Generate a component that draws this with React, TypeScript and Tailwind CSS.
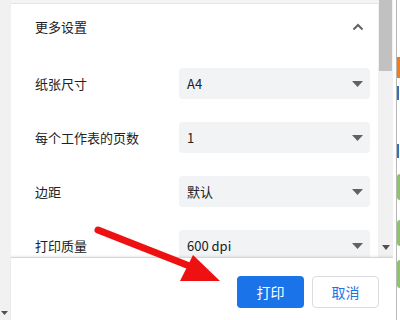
import React from "react";

const font = { fontFamily: '"Noto Sans CJK SC", "Noto Sans", sans-serif' };

function Caret() {
    return (
        <svg width="11" height="6" viewBox="0 0 11 6" className="shrink-0">
            <path d="M0 0 L11 0 L5.5 6 Z" fill="#5f6368" />
        </svg>
    );
}

const rows = [
    { label: "纸张尺寸", value: "A4" },
    { label: "每个工作表的页数", value: "1" },
    { label: "边距", value: "默认" },
    { label: "打印质量", value: "600 dpi" },
];

export default function App() {
    return (
        <div className="relative w-[400px] h-[320px] overflow-hidden bg-white flex" style={font}>
            {/* left strip */}
            <div className="w-[11px] h-full bg-[#f1f1f1] flex flex-col justify-end items-start pb-[5px] pl-[1px]">
                <svg width="7" height="4" viewBox="0 0 7 4">
                    <path d="M0 0 L7 0 L3.5 4 Z" fill="#505050" />
                </svg>
            </div>

            {/* main dialog column */}
            <div className="w-[382px] h-full flex flex-col">
                <div className="h-[257px] flex">
                    {/* scroll content */}
                    <div className="w-[367px] flex flex-col overflow-hidden">
                        <div className="h-[4px] bg-[#f4f4f4] border-b border-[#e6e6e6] shrink-0" />
                        <div className="h-[45px] shrink-0 flex items-center justify-between pl-[24px] pr-[14px]">
                            <span className="text-[13px] text-[#202124]">更多设置</span>
                            <svg width="12" height="8" viewBox="0 0 12 8">
                                <path d="M1.5 6.5 L6 2 L10.5 6.5" stroke="#5f6368" strokeWidth="2" fill="none" />
                            </svg>
                        </div>
                        <div className="flex flex-col gap-[23px] mt-[19px] pl-[24px] pr-[8px]">
                            {rows.map((r) => (
                                <div key={r.label} className="flex items-center h-[31px] shrink-0">
                                    <span className="w-[144px] text-[13px] text-[#202124]">{r.label}</span>
                                    <div className="flex-1 h-full rounded-[4px] bg-[#f1f3f4] flex items-center justify-between pl-[8px] pr-[7px]">
                                        <span className="text-[13px] text-[#202124]">{r.value}</span>
                                        <Caret />
                                    </div>
                                </div>
                            ))}
                        </div>
                    </div>
                    {/* scrollbar */}
                    <div className="w-[15px] h-full bg-[#f1f1f1] flex flex-col items-center justify-between pb-[7px]">
                        <div className="w-[13px] h-[71px] bg-[#c1c1c1]" />
                        <svg width="8" height="5" viewBox="0 0 8 5">
                            <path d="M0 0 L8 0 L4 5 Z" fill="#505050" />
                        </svg>
                    </div>
                </div>

                {/* footer */}
                <div className="flex-1 bg-white border-t border-[#d6d6d6] shadow-[0_-1px_2px_rgba(0,0,0,0.08)] flex justify-end items-start gap-[8px] pt-[18px] pr-[14px]">
                    <button className="w-[67px] h-[32px] rounded-[4px] bg-[#1a73e8] text-white text-[14px]">打印</button>
                    <button className="w-[67px] h-[32px] rounded-[4px] border border-[#dadce0] bg-white text-[#1a73e8] text-[14px]">取消</button>
                </div>
            </div>

            {/* right strip: neighbouring page */}
            <div className="w-[7px] h-full bg-white flex">
                <div className="w-[3px]" />
                <div className="w-px h-full bg-[#b8b8b8]" />
                <div className="flex-1 flex flex-col">
                    <div className="h-[57px]" />
                    <div className="h-[21px] bg-[#f07c1e]" />
                    <div className="h-[8px]" />
                    <div className="h-[14px] w-[2px] bg-[#3b6fb6]" />
                    <div className="h-[44px]" />
                    <div className="h-[14px] w-[2px] bg-[#3b6fb6]" />
                    <div className="h-[16px]" />
                    <div className="h-[26px] rounded-l-full bg-[#8cc46a]" />
                    <div className="h-[20px]" />
                    <div className="h-[26px] rounded-l-full bg-[#8cc46a]" />
                    <div className="h-[14px]" />
                    <div className="h-[28px] rounded-l-full bg-[#8cc46a]" />
                </div>
            </div>

            {/* red annotation arrow */}
            <svg className="absolute inset-0 pointer-events-none" width="400" height="320" viewBox="0 0 400 320">
                <line x1="98" y1="230" x2="192" y2="267" stroke="#ee1111" strokeWidth="7" strokeLinecap="round" />
                <path d="M193 255 L220 281 L180 281 Z" fill="#ee1111" />
            </svg>
        </div>
    );
}
